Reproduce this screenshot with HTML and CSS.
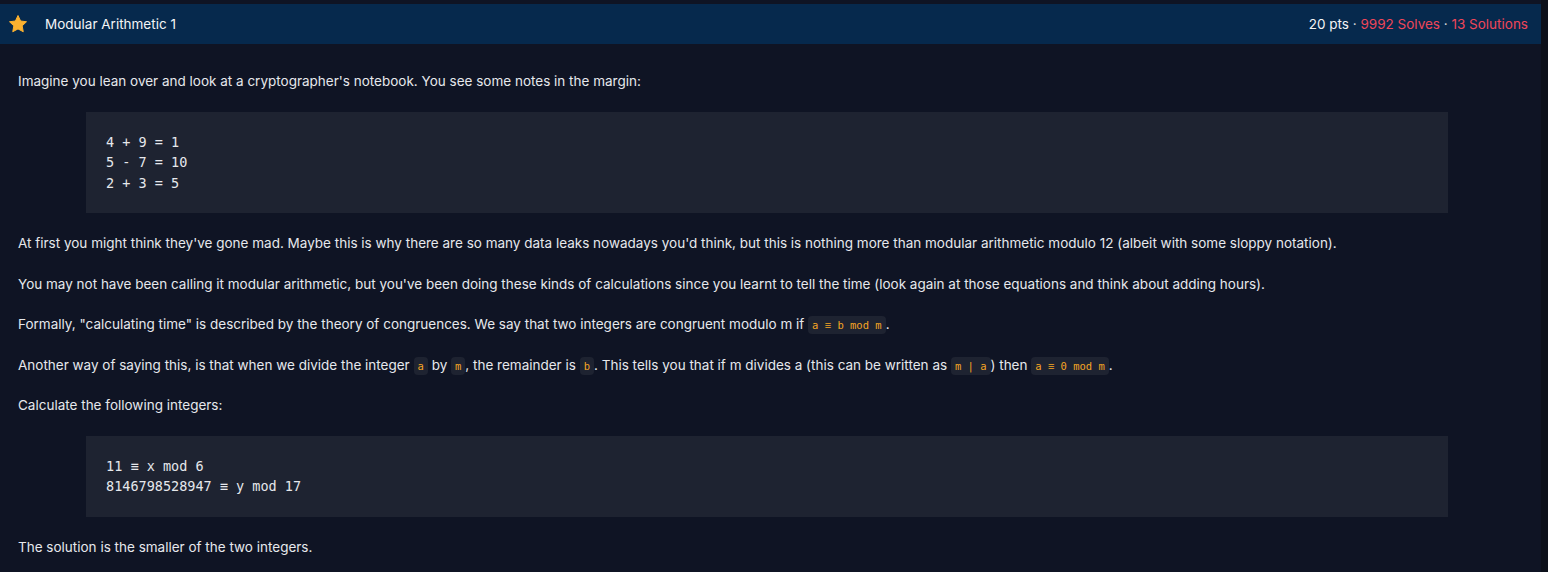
FILE: index.html
```html
<!DOCTYPE html>
<html>
<head>
<meta charset="utf-8">
<link rel="stylesheet" href="styles.css">
</head>
<body>
<div class="page">
  <div class="card">
    <header class="bar">
      <div class="title">
        <svg class="star" width="20" height="20" viewBox="0 0 24 24"><path d="M12 1.8l3.1 6.6 7.1.9-5.2 4.9 1.3 7.1L12 17.9l-6.3 3.4 1.3-7.1L1.8 9.3l7.1-.9z" fill="#fbb130" stroke="#fbb130" stroke-width="1.2" stroke-linejoin="round"/></svg>
        <span>Modular Arithmetic 1</span>
      </div>
      <div class="meta"><span class="pts">20 pts</span> · <span class="red">9992 Solves</span> · <span class="red">13 Solutions</span></div>
    </header>
    <div class="content">
      <p>Imagine you lean over and look at a cryptographer's notebook. You see some notes in the margin:</p>
      <pre class="block">4 + 9 = 1
5 - 7 = 10
2 + 3 = 5</pre>
      <p>At first you might think they've gone mad. Maybe this is why there are so many data leaks nowadays you'd think, but this is nothing more than modular arithmetic modulo 12 (albeit with some sloppy notation).</p>
      <p>You may not have been calling it modular arithmetic, but you've been doing these kinds of calculations since you learnt to tell the time (look again at those equations and think about adding hours).</p>
      <p>Formally, "calculating time" is described by the theory of congruences. We say that two integers are congruent modulo m if <code>a ≡ b mod m</code>.</p>
      <p>Another way of saying this, is that when we divide the integer <code>a</code> by <code>m</code>, the remainder is <code>b</code>. This tells you that if m divides a (this can be written as <code>m | a</code>) then <code>a ≡ 0 mod m</code>.</p>
      <p>Calculate the following integers:</p>
      <pre class="block">11 ≡ x mod 6
8146798528947 ≡ y mod 17</pre>
      <p>The solution is the smaller of the two integers.</p>
    </div>
  </div>
</div>
</body>
</html>
```
FILE: styles.css
```css
html, body {
  margin: 0;
  padding: 0;
  background: #0c101a;
}
body {
  font-family: Inter, "Noto Sans", sans-serif;
  color: #e6e8ec;
  font-size: 13.5px;
}
.page {
  width: 1541px;
  padding-top: 4px;
  background: #0f1424;
  min-height: 568px;
}
.card {
  display: flex;
  flex-direction: column;
}
.bar {
  height: 40px;
  background: #06294d;
  display: flex;
  align-items: center;
  justify-content: space-between;
  padding: 0 13px 0 8px;
}
.title {
  display: flex;
  align-items: center;
  gap: 17px;
  color: #f3f4f6;
}
.star {
  display: block;
  margin-top: -1px;
}
.meta {
  color: #cfd3da;
}
.pts {
  color: #f3f4f6;
}
.red {
  color: #ef4659;
}
.content {
  padding: 27px 18px 0 18px;
}
p {
  margin: 0 0 20px 0;
  line-height: 20.5px;
}
.block {
  margin: 0 75px 20px 68px;
  padding: 20px 20px;
  background: #1e2331;
  font-family: "DejaVu Sans Mono", "Liberation Mono", monospace;
  font-size: 13.5px;
  line-height: 20.5px;
  color: #e6e8ec;
}
code {
  font-family: "DejaVu Sans Mono", "Liberation Mono", monospace;
  font-size: 10.5px;
  line-height: 0;
  color: #f5a524;
  background: #1e2331;
  padding: 3px 4px;
  border-radius: 4px;
}
```
